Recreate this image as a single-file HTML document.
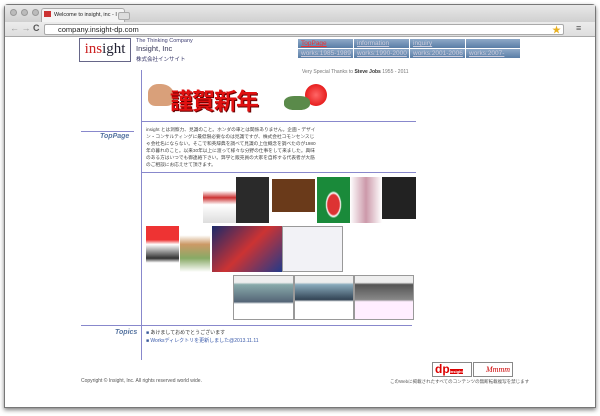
<!DOCTYPE html>
<html><head><meta charset="utf-8"><style>
*{margin:0;padding:0;box-sizing:border-box}
body{width:600px;height:416px;background:#fff;position:relative;overflow:hidden;font-family:"Liberation Sans","Noto Sans CJK JP",sans-serif}
.a{position:absolute}
.win{left:4px;top:4px;width:592px;height:404px;border:1px solid #777;border-radius:4px 4px 0 0;background:#fff;box-shadow:0 2px 4px rgba(0,0,0,.5)}
.title{left:5px;top:5px;width:590px;height:17px;background:linear-gradient(#e8e8e8,#d0d0d0)}
.tool{left:5px;top:22px;width:590px;height:15px;background:linear-gradient(#ececec,#dedede);border-bottom:1px solid #aaa}
.dot{width:7px;height:7px;border-radius:50%;background:#bbb;border:1px solid #999;top:9px}
.nav{font-size:6.5px;color:#ccd;text-decoration:underline;line-height:9px;padding-left:3px;background:linear-gradient(#8ea9c8,#5a7ea6);height:9px;border-right:1px solid #fff}
.vl{background:#8888cc}
.img{position:absolute}
</style></head><body>
<div class="a win"></div>
<div class="a title"></div>
<div class="a dot" style="left:10px"></div><div class="a dot" style="left:21px"></div><div class="a dot" style="left:32px"></div>
<div class="a" style="left:41px;top:8px;width:84px;height:14px;background:#f4f4f4;border:1px solid #aaa;border-bottom:none;border-radius:3px 3px 0 0;font-size:5.5px;line-height:13px;padding-left:12px;color:#222">Welcome to insight, inc - I ×</div>
<div class="a" style="left:44px;top:11px;width:7px;height:6px;background:#c33"></div>
<div class="a" style="left:118px;top:12px;width:12px;height:8px;background:#ddd;border:1px solid #aaa;border-radius:2px"></div>
<div class="a tool"></div>
<div class="a" style="left:10px;top:23px;font-size:9px;color:#999">← → <b style="color:#555">C</b></div>
<div class="a" style="left:44px;top:24px;width:520px;height:11px;background:#fff;border:1px solid #aaa;border-radius:2px;font-size:7.5px;line-height:9px;padding-left:13px;color:#222">company.insight-dp.com</div>
<div class="a" style="left:552px;top:23px;font-size:9px;color:#e8b020">★</div>
<div class="a" style="left:576px;top:23px;font-size:9px;color:#555">≡</div>

<div class="a" style="left:79px;top:38px;width:52px;height:24px;border:1px solid #668;font-family:'Liberation Serif',serif;font-size:15px;line-height:21px;text-align:center;color:#223"><span style="color:#c22">ins</span>ight</div>
<div class="a" style="left:136px;top:38px;font-size:5.5px;color:#447">The Thinking Company</div>
<div class="a" style="left:136px;top:44px;font-size:7.5px;color:#335">Insight, Inc</div>
<div class="a" style="left:136px;top:55px;font-size:5.5px;color:#336">株式会社インサイト</div>

<div class="a" style="left:298px;top:39px;width:223px;display:flex;flex-wrap:wrap">
<div class="nav" style="width:56px;color:#e33">TopPage</div><div class="nav" style="width:56px">information</div><div class="nav" style="width:56px">inquiry</div><div class="nav" style="width:55px"></div>
<div class="nav" style="width:56px;margin-top:1px">works:1985-1989</div><div class="nav" style="width:56px;margin-top:1px">works:1990-2000</div><div class="nav" style="width:56px;margin-top:1px">works:2001-2006</div><div class="nav" style="width:55px;margin-top:1px">works:2007-</div>
</div>

<div class="a vl" style="left:141px;top:70px;width:1px;height:290px"></div>
<div class="a" style="left:302px;top:69px;font-size:5px;color:#777">Very Special Thanks to <b style="color:#333">Steve Jobs</b> 1955 - 2011</div>
<div class="a" style="left:148px;top:84px;width:26px;height:22px;background:#d9a07a;border-radius:40% 50% 30% 30%"></div>
<div class="a" style="left:170px;top:82px;font-size:23px;font-weight:bold;color:#e01010;letter-spacing:-1px;text-shadow:1px 1px 0 #600">謹賀新年</div>
<div class="a" style="left:305px;top:84px;width:22px;height:22px;border-radius:50%;background:radial-gradient(#f66,#d00)"></div>
<div class="a" style="left:284px;top:96px;width:26px;height:14px;background:#5a8a4a;border-radius:40%"></div>
<div class="a vl" style="left:141px;top:121px;width:275px;height:1px"></div>

<div class="a vl" style="left:81px;top:131px;width:53px;height:1px"></div>
<div class="a" style="left:100px;top:133px;font-size:7px;font-style:italic;font-weight:bold;color:#5573a0">TopPage</div>
<div class="a" style="left:146px;top:127px;width:170px;font-size:4.7px;line-height:6.9px;color:#444">insight とは洞察力、見識のこと。ホンダの車とは関係ありません。企画・デザイン・コンサルティングに最低限必要なのは見識ですが、株式会社コモンセンスじゃ会社名にならない。そこで和英辞典を調べて見識の上位概念を調べたのが1980年の暮れのこと。以来30年以上に渡って様々な分野の仕事をして来ました。興味のある方はいつでも御連絡下さい。弊学と販売員の大家を自称する代表者が大筋のご相談にお応えせて頂きます。</div>
<div class="a vl" style="left:141px;top:172px;width:275px;height:1px"></div>

<div class="img" style="left:203px;top:177px;width:33px;height:46px;background:linear-gradient(#fff 30%,#c33 45%,#fff 60%,#ddd)"></div>
<div class="img" style="left:236px;top:177px;width:33px;height:46px;background:#2a2a2a"></div>
<div class="img" style="left:272px;top:179px;width:43px;height:44px;background:linear-gradient(#6a3a1a 75%,#fff 75%)"></div>
<div class="img" style="left:317px;top:177px;width:33px;height:46px;background:radial-gradient(ellipse at 50% 60%,#d33 25%,#fff 30%,#1a8a3a 35%)"></div>
<div class="img" style="left:350px;top:177px;width:32px;height:46px;background:linear-gradient(90deg,#fff,#c9a 50%,#fff)"></div>
<div class="img" style="left:382px;top:177px;width:34px;height:42px;background:#222"></div>
<div class="img" style="left:146px;top:226px;width:33px;height:46px;background:linear-gradient(#e33 30%,#fff 40%,#333 70%,#fff 80%)"></div>
<div class="img" style="left:180px;top:226px;width:30px;height:46px;background:linear-gradient(#fff 20%,#c96 40%,#8a6 70%,#fff)"></div>
<div class="img" style="left:212px;top:226px;width:70px;height:46px;background:linear-gradient(135deg,#1a2a6a,#c33 50%,#223a8a)"></div>
<div class="img" style="left:282px;top:226px;width:61px;height:46px;background:#f2f2f6;border:1px solid #999"></div>
<div class="img" style="left:233px;top:275px;width:61px;height:45px;background:linear-gradient(#eee 15%,#8aa 20%,#567 60%,#fff 65%);border:1px solid #999"></div>
<div class="img" style="left:294px;top:275px;width:60px;height:45px;background:linear-gradient(#eee 15%,#8ab 20%,#345 55%,#fff 60%);border:1px solid #999"></div>
<div class="img" style="left:354px;top:275px;width:60px;height:45px;background:linear-gradient(#eee 15%,#555 20%,#888 55%,#fef 60%);border:1px solid #999"></div>

<div class="a vl" style="left:81px;top:325px;width:331px;height:1px"></div>
<div class="a" style="left:115px;top:329px;font-size:7px;font-style:italic;font-weight:bold;color:#5573a0">Topics</div>
<div class="a" style="left:146px;top:330px;font-size:5px;color:#333;line-height:7.5px"><span style="color:#3a5a9a">■</span> あけましておめでとうございます<br><span style="color:#3a5a9a">■</span> <span style="color:#3a5aaa">Worksディレクトリを更新しました@2013.11.11</span></div>

<div class="a" style="left:432px;top:362px;width:40px;height:15px;border:1px solid #888;background:#fff;color:#d00;font-weight:bold;font-size:12px;line-height:13px;padding-left:2px">dp<span style="font-size:4px;color:#fff;background:#d00">insight</span></div>
<div class="a" style="left:473px;top:362px;width:40px;height:15px;border:1px solid #888;background:#fff;color:#c00;font-style:italic;font-family:'Liberation Serif',serif;font-size:8px;line-height:14px;text-align:right;padding-right:2px">Mmmm</div>
<div class="a" style="left:81px;top:378px;font-size:5px;color:#555">Copyright ©  Insight, Inc.   All rights reserved world wide.</div>
<div class="a" style="left:390px;top:379px;font-size:4.5px;color:#555">このWebに掲載されたすべてのコンテンツの無断転載複写を禁じます</div>
</body></html>
